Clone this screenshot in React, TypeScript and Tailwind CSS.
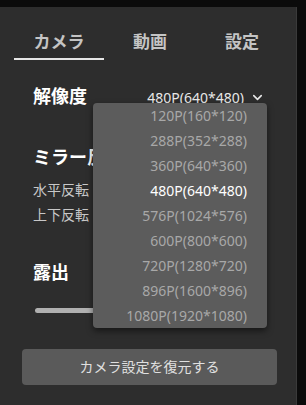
import React from "react";
import { ChevronDown } from "lucide-react";

const resolutions = [
    "120P(160*120)",
    "288P(352*288)",
    "360P(640*360)",
    "480P(640*480)",
    "576P(1024*576)",
    "600P(800*600)",
    "720P(1280*720)",
    "896P(1600*896)",
    "1080P(1920*1080)",
];

const font = { fontFamily: '"Noto Sans", "Noto Sans CJK JP", sans-serif' };

export default function App() {
    const selected = "480P(640*480)";
    return (
        <div className="w-[306px] h-[405px] bg-[#0b0b0b] flex flex-col overflow-hidden" style={font}>
            <div className="h-[7px] shrink-0" />
            <div className="flex flex-1">
                <div className="relative w-[297px] bg-[#2d2d2d] border-r border-[#3a3a3a]">
                    {/* Tabs */}
                    <div className="grid grid-cols-[90px_90px_90px] px-[14px] pt-[22px]">
                        <div className="flex flex-col items-center">
                            <span className="text-[17px] font-bold text-[#c4c4c4] leading-[26px]">カメラ</span>
                            <div className="mt-[3px] h-[1.5px] w-full bg-[#e6e6e6]" />
                        </div>
                        <div className="flex justify-center">
                            <span className="text-[17px] font-bold text-[#c4c4c4] leading-[26px] pl-[2px]">動画</span>
                        </div>
                        <div className="flex justify-center">
                            <span className="text-[17px] font-bold text-[#c4c4c4] leading-[26px] pl-[6px]">設定</span>
                        </div>
                    </div>

                    <div className="pl-[33px] pr-[34px]">
                        {/* Resolution */}
                        <div className="mt-[24px] flex items-center justify-between h-[26px]">
                            <span className="text-[18px] font-bold text-white">解像度</span>
                            <div className="flex items-center gap-[6px] text-[14px] text-[#e8e8e8] pt-[2px] -mr-[3px]">
                                <span>{selected}</span>
                                <ChevronDown size={15} strokeWidth={2.5} />
                            </div>
                        </div>

                        {/* Mirror */}
                        <div className="mt-[34px] text-[18px] font-bold text-white leading-[26px]">ミラー反転</div>
                        <div className="mt-[7px] text-[14px] text-[#c8c8c8] leading-[25px]">水平反転</div>
                        <div className="text-[14px] text-[#c8c8c8] leading-[25px]">上下反転</div>

                        {/* Exposure */}
                        <div className="mt-[32px] text-[18px] font-bold text-white leading-[26px]">露出</div>
                        <div className="mt-[23px] ml-[2px] h-[5px] w-[120px] rounded-full bg-[#b0b0b0]" />
                    </div>

                    {/* Reset */}
                    <div className="px-[22px] mt-[36px] pr-[19px]">
                        <button className="w-full h-[36px] rounded-[4px] bg-[#5a5a5a] text-[14px] text-[#e0e0e0]">
                            カメラ設定を復元する
                        </button>
                    </div>

                    {/* Dropdown */}
                    <div className="absolute left-[93px] top-[96px] w-[174px] rounded-[4px] bg-[#5c5c5c] shadow-[0_3px_6px_rgba(0,0,0,0.5)]">
                        {resolutions.map((r) => (
                            <div
                                key={r}
                                className={`h-[25px] flex items-center justify-end pr-[20px] text-[14px] ${r === selected ? "text-white" : "text-[#a8a8a8]"}`}
                            >
                                {r}
                            </div>
                        ))}
                    </div>
                </div>
            </div>
        </div>
    );
}
